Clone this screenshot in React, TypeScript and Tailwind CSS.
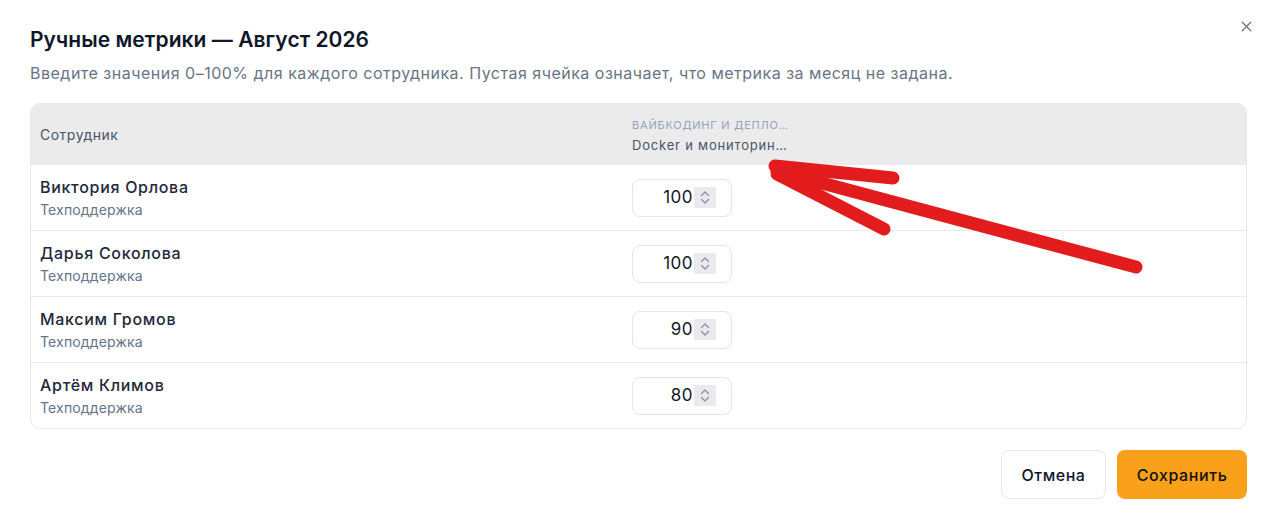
import React from 'react';
import { X } from 'lucide-react';

interface Employee {
  name: string;
  dept: string;
  value: number;
}

const employees: Employee[] = [
  { name: 'Виктория Орлова', dept: 'Техподдержка', value: 100 },
  { name: 'Дарья Соколова', dept: 'Техподдержка', value: 100 },
  { name: 'Максим Громов', dept: 'Техподдержка', value: 90 },
  { name: 'Артём Климов', dept: 'Техподдержка', value: 80 },
];

const Spinner = () => (
  <span className="ml-[1px] flex h-[21px] w-[22px] items-center justify-center bg-[#e9e9ee]">
    <svg width="10" height="17" viewBox="0 0 10 17" fill="none" stroke="#8b8f99" strokeWidth="1.2" strokeLinecap="round" strokeLinejoin="round">
      <path d="M1.5 6.5 L5 3 L8.5 6.5" />
      <path d="M1.5 10.5 L5 14 L8.5 10.5" />
    </svg>
  </span>
);

const MetricInput = ({ value }: { value: number }) => (
  <div className="flex h-[38px] w-[100px] items-center justify-end rounded-[8px] border border-[#e3e5ea] bg-white pr-[15px]">
    <span className="text-[17px] leading-none tracking-[0.5px] text-[#111827]">{value}</span>
    <Spinner />
  </div>
);

export default function App() {
  return (
    <div className="relative h-[528px] w-[1277px] overflow-hidden bg-white px-[30px] font-['Inter','Noto_Sans',sans-serif]">
      <button className="absolute right-[22px] top-[18px] text-[#6b7280]">
        <X className="h-[17px] w-[17px]" strokeWidth={1.8} />
      </button>

      <h2 className="pt-[26px] text-[21px] font-semibold leading-[28px] tracking-[0.05px] text-[#0f172a]">
        Ручные метрики — Август 2026
      </h2>
      <p className="mt-[8px] text-[16px] leading-[22px] tracking-[0.5px] text-[#687485]">
        Введите значения 0–100% для каждого сотрудника. Пустая ячейка означает, что метрика за месяц не задана.
      </p>

      <div className="mt-[19px] overflow-hidden rounded-[10px] border border-[#e4e6ea]">
        <div className="grid h-[60px] grid-cols-[591px_1fr] items-center bg-[#ebebeb]">
          <div className="px-[9px] text-[14px] tracking-[0.5px] text-[#475569]">Сотрудник</div>
          <div className="px-[10px] pt-[1px]">
            <div className="text-[11px] uppercase leading-[16px] tracking-[0.8px] text-[#94a3b8]">Вайбкодинг и депло…</div>
            <div className="mt-[4px] text-[13px] leading-[16px] tracking-[0.8px] text-[#475569]">Docker и мониторин…</div>
          </div>
        </div>
        {employees.map((e) => (
          <div key={e.name} className="grid h-[66px] grid-cols-[591px_1fr] items-center border-t border-[#e8eaee]">
            <div className="px-[9px] pt-[1px]">
              <div className="text-[16px] font-medium leading-[20px] tracking-[0.7px] text-[#1e293b]">{e.name}</div>
              <div className="mt-[4px] text-[14px] leading-[18px] tracking-[0.15px] text-[#64748b]">{e.dept}</div>
            </div>
            <div className="px-[10px]">
              <MetricInput value={e.value} />
            </div>
          </div>
        ))}
      </div>

      <div className="mt-[21px] flex justify-end gap-[11px]">
        <button className="h-[49px] w-[105px] rounded-[8px] border border-[#e4e6ea] bg-white text-[16px] font-medium tracking-[0.5px] text-[#0f172a]">
          Отмена
        </button>
        <button className="h-[49px] w-[130px] rounded-[8px] bg-[#f9a11b] text-[16px] font-medium tracking-[0.6px] text-[#111111]">
          Сохранить
        </button>
      </div>

      <svg className="pointer-events-none absolute left-0 top-0" width="1277" height="528" fill="none" stroke="#e21c1c" strokeWidth="13" strokeLinecap="round" strokeLinejoin="round">
        <path d="M1136 267 L777 171" />
        <path d="M775 166 L893 178" />
        <path d="M777 174 L884 229" />
      </svg>
    </div>
  );
}
